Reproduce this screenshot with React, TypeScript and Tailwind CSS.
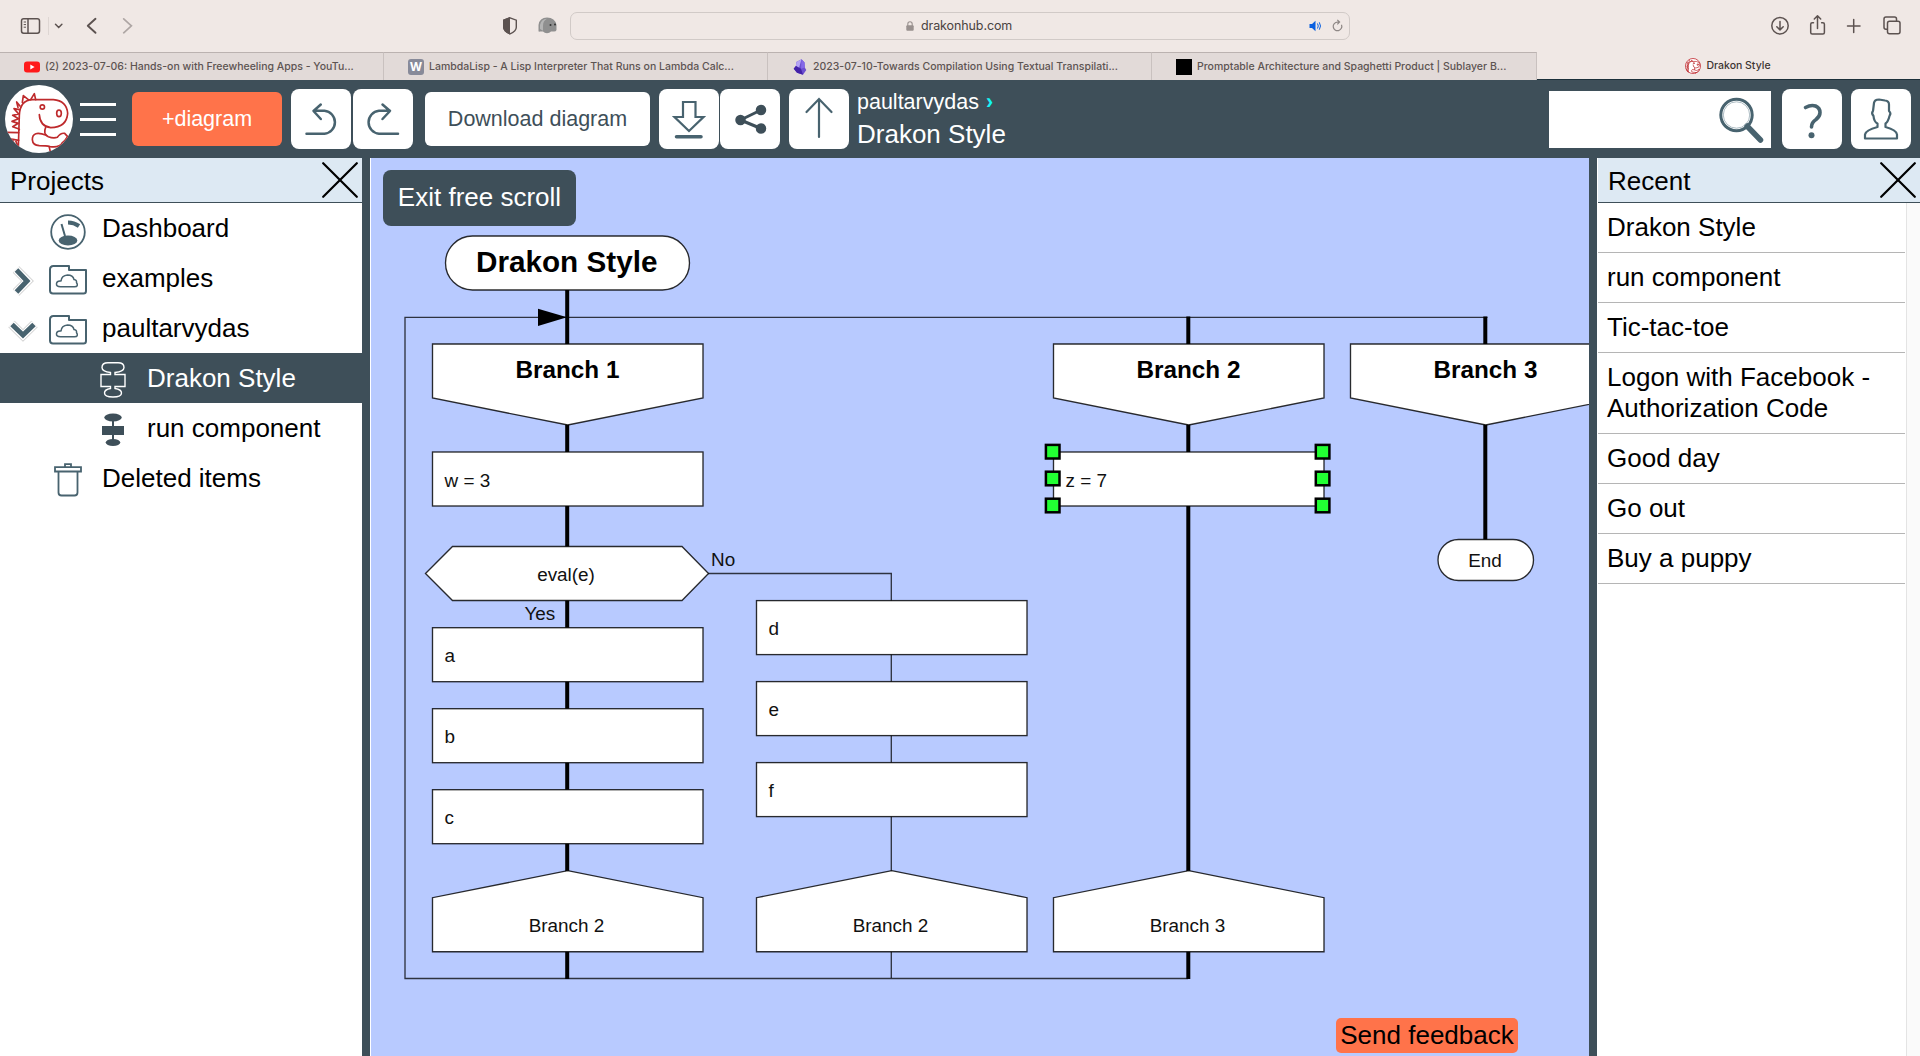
import React from "react";

const SANS = "font-['Liberation_Sans',Arial,sans-serif]";
const UI = "font-[Inter,sans-serif]";
const DARK = "#3e4f59";
const STEEL = "#48636f";

/* ---------- Logo ---------- */

function Dino({ size, ring = false }: { size: number; ring?: boolean }) {
  return (
    <svg width={size} height={size} viewBox="15 21 204 204" className="shrink-0">
      <defs>
        <clipPath id="dino-clip">
          <circle cx="117" cy="123" r="102" />
        </clipPath>
      </defs>
      <circle cx="117" cy="123" r={ring ? 96 : 102} fill="#fff" stroke={ring ? "#c1272d" : "none"} strokeWidth="10" />
      <g clipPath="url(#dino-clip)" fill="none" stroke="#be2a2c" strokeWidth={ring ? 9 : 5} strokeLinejoin="round" strokeLinecap="round">
        <path d="M55 208 L58 112 Q60 66 98 65 L160 65 Q200 68 203 106 Q200 148 152 149 Q120 145 118 110" />
        <circle cx="127" cy="87" r="6.5" />
        <ellipse cx="177" cy="106" rx="7" ry="10" />
        <path d="M137 148 Q128 168 145 176 Q160 182 172 178 Q182 164 194 166 L203 176" />
        <path d="M139 172 Q97 156 97 185 Q98 202 118 203 Q140 203 150 206 Q180 210 187 194 Q194 190 201 178" />
        <path d="M148 208 L152 226" />
        <path d="M92 65 L103 47 L107 65 M67 73 L70 53 L85 65 M60 84 L50 72 L54 88" />
        <path d="M58 95 L42 92 L56 108 L38 112 L56 122 L36 130 L55 136 L38 146 L55 152 L58 155" />
        <path d="M18 163 L56 164 M22 181 L56 187 M36 183 L44 202 M46 186 L52 200" />
      </g>
    </svg>
  );
}

/* ---------- Browser chrome ---------- */

function BrowserBar() {
  return (
    <div className="flex h-[52px] items-center bg-[#f0e8e5] text-[#5c5250]">
      <svg width="110" height="52" viewBox="0 0 110 52" fill="none" stroke="currentColor" strokeWidth="1.5" className="ml-5 shrink-0">
        <rect x="1.5" y="18.7" width="18" height="14.6" rx="2.2" />
        <path d="M8 18.7v14.6" />
        <path d="M3.7 22h2.3M3.7 24.6h2.3M3.7 27.2h2.3" strokeWidth="1" />
        <path d="M28.5 17v18" stroke="#ded6d3" strokeWidth="1" />
        <path d="M35.5 24.3l3.2 3.2 3.2-3.2" strokeLinecap="round" />
        <path d="M75.5 18.8l-7.7 7 7.7 7" strokeWidth="1.9" strokeLinecap="round" strokeLinejoin="round" />
        <path d="M103.7 18.8l7.7 7-7.7 7" stroke="#aea6a4" strokeWidth="1.7" strokeLinecap="round" />
      </svg>
      <svg width="6" height="52" viewBox="0 0 6 52" fill="none" className="shrink-0">
        <path d="M-6.3 18.8l7.7 7-7.7 7" stroke="#aea6a4" strokeWidth="1.7" strokeLinecap="round" />
      </svg>
      <svg width="60" height="52" viewBox="500 0 60 52" className="ml-[364px] shrink-0">
        <path d="M510 17.8l6.3 2.4v7q0 4-6.3 6.6q-6.3-2.6-6.3-6.6v-7z" fill="none" stroke="currentColor" strokeWidth="1.4" />
        <path d="M510 17v17.5q-7-3-7-7.5v-7.3z" fill="currentColor" />
        <path d="M538.5 31v-6q1-7.500 8.500-7.500q8 0 9.500 7.500v5q-.5 1.500-2.500 1.500h-3q-1.500 1.800-4 1.800t-4-1.800h-3q-1.500.5-1.500-.5z" fill="#8f8f8f" />
        <path d="M540 29v-4q1-6 7-6.300q-4 2-4 7v5z" fill="#b4b4b4" />
        <circle cx="550.500" cy="25" r="1" fill="#333" />
        <circle cx="555" cy="24.500" r="1" fill="#333" />
      </svg>
      <div className="ml-[10px] flex h-7 w-[780px] shrink-0 items-center rounded-[7px] border border-[#d1cac7]">
        <div className="flex w-full items-center">
          <svg width="8" height="10" viewBox="0 0 8 10" className="ml-[335px] shrink-0">
            <path d="M1.8 5V3a2.200 2.200 0 0 1 4.400 0v2" fill="none" stroke="#99918f" strokeWidth="1.100" />
            <rect x="0.300" y="4.200" width="7.400" height="5.600" rx="1" fill="#99918f" />
          </svg>
          <span className={`${UI} ml-[7px] w-[388px] text-[12.500px] leading-4 tracking-[-0.1px] text-[#4a4341]`}>drakonhub.com</span>
          <svg width="36" height="14" viewBox="0 0 36 14" fill="none" className="shrink-0">
            <path d="M.5 5h2.500l3.500-3.200v10.500l-3.500-3.200h-2.500z" fill="#0a60e0" />
            <path d="M8.500 4.500q1.500 2.500 0 5M10.300 3.300q2.400 3.700 0 7.400" stroke="#0a60e0" strokeWidth="1" />
            <path d="M32.500 5.800a4.300 4.300 0 1 1-4-2.700h1.500M28.300.8l2.300 2.300-2.300 2.300" stroke="#8e8785" strokeWidth="1.200" />
          </svg>
        </div>
      </div>
      <svg width="136" height="52" viewBox="1770 0 136 52" fill="none" stroke="currentColor" strokeWidth="1.5" strokeLinecap="round" strokeLinejoin="round" className="ml-[420px] shrink-0">
        <circle cx="1780" cy="25.700" r="8.200" />
        <path d="M1780 21.500v8.200M1776.800 26.700l3.200 3.200 3.200-3.200" />
        <path d="M1813.500 22.700h-1.300q-1.500 0-1.500 1.500v8.300q0 1.500 1.500 1.500h10.700q1.500 0 1.500-1.500v-8.300q0-1.500-1.500-1.500h-1.300" />
        <path d="M1817.500 28.500v-12.500M1814.300 19l3.200-3.200 3.200 3.200" />
        <path d="M1847.500 26h12.500M1853.700 19.500v13" />
        <rect x="1887.500" y="21.200" width="12.500" height="12.500" rx="2" />
        <path d="M1887 29.300h-1q-2 0-2-2v-8.300q0-2 2-2h8.500q2 0 2 2v1.500" />
      </svg>
    </div>
  );
}

function Tab({ children, text, className, textClass }: { children: React.ReactNode; text: string; className: string; textClass: string }) {
  return (
    <div className={`flex h-[28px] shrink-0 items-center border-t border-[#bbb2b0] bg-[#e2dad8] ${className}`}>
      <span className="flex w-4 shrink-0 justify-center">{children}</span>
      <span className={`${UI} ml-[5px] whitespace-nowrap text-[10.500px] font-medium leading-4 text-[#5d5452] ${textClass}`}>{text}</span>
    </div>
  );
}

function TabBar() {
  return (
    <div className="flex h-7 border-b border-[#1c303a] bg-[#f0e8e5]">
      <Tab className="w-[384px] border-r border-r-[#c9c1bf] pl-6" textClass="" text="(2) 2023-07-06: Hands-on with Freewheeling Apps - YouTu...">
        <svg width="16" height="12" viewBox="0 0 16 12">
          <rect width="16" height="11" y=".5" rx="3" fill="#ff1a1a" />
          <path d="M6.300 3.500v5l4.300-2.500z" fill="#fff" />
        </svg>
      </Tab>
      <Tab className="w-[384px] border-r border-r-[#c9c1bf] pl-6" textClass="" text="LambdaLisp - A Lisp Interpreter That Runs on Lambda Calc...">
        <span className={`${UI} flex size-4 items-center justify-center rounded-[3px] bg-[#878a99] text-[12px] font-bold leading-none text-white`}>W</span>
      </Tab>
      <Tab className="w-[384px] border-r border-r-[#c9c1bf] pl-6" textClass="" text="2023-07-10-Towards Compilation Using Textual Transpilati...">
        <svg width="14" height="16" viewBox="0 0 14 16">
          <path d="M8.500.3l3 3.200.3 5 1.500 2.500-3.300 4.700-6-2-3.300-4 2.300-3.200.3-3.500z" fill="#6c4fd0" />
          <path d="M8.500.3l-5.200 2.700-.3 4 3 2z" fill="#b5a4f5" />
          <path d="M3 7l-2.300 2.700 3.300 4 6 2-2-6z" fill="#4322a8" />
          <path d="M8.500.3l3 3.200.3 5-3.800 1.200z" fill="#8468e8" />
        </svg>
      </Tab>
      <Tab className="w-[385px] border-r border-r-[#c9c1bf] pl-6" textClass="" text="Promptable Architecture and Spaghetti Product | Sublayer B...">
        <span className="size-4 bg-black" />
      </Tab>
      <div className="flex grow items-center justify-center">
        <Dino size={16} ring />
        <span className={`${UI} ml-[5px] mr-px text-[10.500px] font-medium leading-4 text-[#3d3533]`}>Drakon Style</span>
      </div>
    </div>
  );
}

/* ---------- Application header ---------- */

function IconButton({ children, className = "" }: { children: React.ReactNode; className?: string }) {
  return (
    <button className={`h-[60px] w-[60px] shrink-0 rounded-[8px] bg-white ${className}`}>
      <svg width="60" height="60" viewBox="0 0 60 60" fill="none" stroke={STEEL} strokeWidth="2.500" strokeLinecap="round" strokeLinejoin="round">
        {children}
      </svg>
    </button>
  );
}

function AppHeader() {
  return (
    <header className="flex h-[78px] items-center bg-[#3e4f59] pl-[5px]">
      <Dino size={68} />
      <div className="ml-[7px] flex w-9 flex-col gap-3">
        <span className="h-[3px] bg-white" />
        <span className="h-[3px] bg-white" />
        <span className="h-[3px] bg-white" />
      </div>
      <button className="ml-4 h-[54px] w-[150px] shrink-0 rounded-[6px] bg-[#ff734a] text-[21.500px] text-white">+diagram</button>
      <IconButton className="ml-[9px]">
        <path d="M15.500 44.700H33.500A11.500 11.500 0 0 0 33.500 21.800H23M29.800 15.500L22.500 22L29.800 30" />
      </IconButton>
      <IconButton className="ml-[2px]">
        <path d="M45 44.700H26A11.500 11.500 0 0 1 26 21.800H37M29.500 15.500L37 22L29.500 30" />
      </IconButton>
      <button className="ml-3 h-[54px] w-[225px] shrink-0 rounded-[6px] bg-white text-[21.500px] text-[#3e4f59]">Download diagram</button>
      <IconButton className="ml-[9px]">
        <path d="M24 13H36.500V28H44.500L30 42L15.500 28H24Z" strokeLinejoin="miter" strokeWidth="2.200" />
        <path d="M17.500 47.700H42" strokeWidth="3.500" />
      </IconButton>
      <IconButton className="ml-px">
        <g stroke={DARK} fill={DARK}>
          <path d="M41 21L20.500 31L41 39.500" fill="none" strokeWidth="3" />
          <circle cx="41" cy="21" r="4" />
          <circle cx="20.500" cy="31" r="4" />
          <circle cx="41" cy="39.500" r="4" />
        </g>
      </IconButton>
      <IconButton className="ml-[9px]">
        <path d="M30 48V10M17.500 23L30 10L42.500 23" strokeWidth="2.200" strokeLinejoin="miter" />
      </IconButton>
      <div className="ml-2 flex flex-col whitespace-nowrap text-white">
        <span className="text-[21.500px] leading-[26px]">
          paultarvydas <span className="ml-px font-bold text-[#15f5f5]">›</span>
        </span>
        <span className="mt-1 text-[26px] leading-[31px]">Drakon Style</span>
      </div>
      <div className="ml-auto flex h-[57px] w-[222px] shrink-0 justify-end bg-white">
        <svg width="60" height="57" viewBox="0 0 60 57" fill="none" stroke={STEEL}>
          <path d="M36 35L49.500 49" strokeWidth="5.500" strokeLinecap="round" />
          <circle cx="25.500" cy="24" r="15.700" strokeWidth="3" />
          <circle cx="25.500" cy="24" r="13.200" strokeWidth=".7" stroke="#8ba0aa" />
        </svg>
      </div>
      <IconButton className="ml-[11px]">
        <path d="M23.500 18.500Q29 15.500 33.500 17Q38 19 38 23.500Q38 27.500 34 30.500Q29.500 33.500 29.500 38" strokeWidth="3.600" />
        <circle cx="29.500" cy="46.300" r="3" fill={STEEL} stroke="none" />
      </IconButton>
      <IconButton className="ml-[9px] mr-[9px]">
        <path d="M22 22L23 14Q23.500 10.500 28 10.500L34 11.500Q38 12 38 15.500V22Q40.500 24 38.500 27Q37 33 34.500 34.500V38Q45.500 41 46 45.500V49.500H14V45.500Q15 41 26.500 38V34.500Q23 33 22.500 27Q20 24 22 22Z" strokeWidth="2.200" />
      </IconButton>
    </header>
  );
}

/* ---------- Side panels ---------- */

function PanelHeader({ title, className }: { title: string; className: string }) {
  return (
    <div className={`flex h-[45px] items-center justify-between border-b border-[#3e4f59] bg-[#dde9f3] ${className}`}>
      <span className="mt-[3px] text-[26px] leading-[31px]">{title}</span>
      <svg width="36" height="36" viewBox="0 0 36 36" stroke="#000" strokeWidth="2.200" strokeLinecap="round">
        <path d="M1.200 1.200L34.800 34.800M34.800 1.200L1.200 34.800" />
      </svg>
    </div>
  );
}

function CloudFolder() {
  return (
    <svg width="38" height="30" viewBox="0 0 38 30" fill="none" stroke={STEEL} strokeWidth="2" strokeLinejoin="round">
      <path d="M1 4.500Q1 1 4.500 1H20V5H37V26Q37 28.500 34.500 28.500H4Q1 28.500 1 25.500Z" />
      <path d="M11.500 21.800Q7 21.500 7.500 18.500Q8 15.500 12 16Q12.500 10.500 18.500 10Q24 10 25 14.500Q28 15 27.500 17.500Q30 21.500 25.500 21.800Z" strokeWidth="1.500" />
    </svg>
  );
}

function Chevron({ down = false }: { down?: boolean }) {
  return (
    <svg width="34" height="34" viewBox="0 0 34 34" fill="none" className={down ? "rotate-90" : ""}>
      <path d="M10 5.500L21.500 17L10 28.500" stroke="#c9c9c9" strokeWidth="9" />
      <path d="M10 5.500L21.500 17L10 28.500" stroke="#fff" strokeWidth="7.500" />
      <path d="M10.500 6L21 17L10.500 28" stroke={STEEL} strokeWidth="5" />
    </svg>
  );
}

function TreeRow({ chevron, icon, label, nested = false, active = false }: { chevron?: React.ReactNode; icon: React.ReactNode; label: string; nested?: boolean; active?: boolean }) {
  return (
    <div className={`flex h-[50px] items-center ${active ? "bg-[#3e4f59] text-white" : ""}`}>
      <span className="flex w-[45px] shrink-0 justify-center pt-[6px]">{chevron}</span>
      <span className={`flex shrink-0 justify-center pt-1 ${nested ? "ml-[45px] w-[45px]" : "w-[45px]"}`}>{icon}</span>
      <span className={`${nested ? "ml-3" : "ml-3"} whitespace-nowrap text-[26px] leading-[31px]`}>{label}</span>
    </div>
  );
}

function ProjectsPanel() {
  return (
    <aside className="w-[362px] shrink-0 bg-white">
      <PanelHeader title="Projects" className="pl-[10px] pr-1" />
      <TreeRow
        label="Dashboard"
        icon={
          <svg width="36" height="36" viewBox="0 0 36 36" fill="none" stroke={STEEL} className="mt-1">
            <circle cx="18" cy="18" r="16.800" strokeWidth="1.800" />
            <ellipse cx="18" cy="26.500" rx="9.300" ry="5" fill={STEEL} stroke="none" />
            <path d="M11.500 10L15 22" strokeWidth="2" />
            <path d="M18 8.500Q24 8.500 29 12" strokeWidth="4" />
          </svg>
        }
      />
      <TreeRow chevron={<Chevron />} icon={<CloudFolder />} label="examples" />
      <TreeRow chevron={<Chevron down />} icon={<CloudFolder />} label="paultarvydas" />
      <TreeRow
        nested
        active
        label="Drakon Style"
        icon={
          <svg width="26" height="36" viewBox="0 0 26 36" fill="none" stroke="#fff" strokeWidth="1.400">
            <path d="M10.500 12.500V10.500Q2 9.500 2 5.500Q2 .8 8 .8H18Q24 .8 24 5.500Q24 9.500 15 10.500V12.500H25V24.500H15V26.500Q21.500 27.500 21.500 31Q21.500 35 13 35Q4.500 35 4.500 31Q4.500 27.500 10.500 26.500V24.500H1V12.500Z" />
          </svg>
        }
      />
      <TreeRow
        nested
        label="run component"
        icon={
          <svg width="26" height="34" viewBox="0 0 26 34" fill={DARK}>
            <ellipse cx="13" cy="4.500" rx="8.700" ry="4" />
            <rect x="2" y="13" width="22" height="9" />
            <ellipse cx="13" cy="29.500" rx="7.300" ry="3.500" />
            <rect x="12" y="5" width="2" height="24" />
          </svg>
        }
      />
      <TreeRow
        label="Deleted items"
        icon={
          <svg width="28" height="34" viewBox="0 0 28 34" fill="none" stroke={STEEL} strokeWidth="1.800">
            <path d="M1 4.200H27V8.500H1ZM11 4V1.200H17V4M4.500 9V29.500Q4.500 32.500 7.500 32.500H20.500Q23.500 32.500 23.500 29.500V9" />
          </svg>
        }
      />
    </aside>
  );
}

const RECENT = ["Drakon Style", "run component", "Tic-tac-toe", "Logon with Facebook - Authorization Code", "Good day", "Go out", "Buy a puppy"];

function RecentPanel() {
  return (
    <aside className="flex w-[322px] shrink-0 flex-col bg-white">
      <PanelHeader title="Recent" className="pl-[10px] pr-1" />
      <div className="flex grow">
        <ul className="w-[307px] shrink-0">
          {RECENT.map((item) => (
            <li key={item} className="border-b border-[#b5b5b5] pb-[9px] pl-[9px] pr-4 pt-[9px] text-[26px] leading-[31px]">
              {item}
            </li>
          ))}
        </ul>
        <div className="ml-px grow border-l border-[#e4e4e4] bg-[#fafafa]" />
      </div>
    </aside>
  );
}

/* ---------- Diagram ---------- */

function Action({ x, y, text }: { x: number; y: number; text: string }) {
  return (
    <g>
      <rect x={x} y={y} width="270.500" height="54" fill="#fff" stroke="#000" strokeOpacity=".82" strokeWidth="1.350" />
      <text x={x + 12} y={y + 34.500} fontSize="18.900" fill="#111">{text}</text>
    </g>
  );
}

function Header({ x, y, text }: { x: number; y: number; text: string }) {
  return (
    <g>
      <path d={`M${x} ${y}h270.500v54l-135.250 27l-135.250-27z`} fill="#fff" stroke="#000" strokeOpacity=".82" strokeWidth="1.350" />
      <text x={x + 135} y={y + 34} fontSize="24.300" fontWeight="700" textAnchor="middle">{text}</text>
    </g>
  );
}

function Footer({ x, y, text }: { x: number; y: number; text: string }) {
  return (
    <g>
      <path d={`M${x} ${y}v-54l135.250-27l135.250 27v54z`} fill="#fff" stroke="#000" strokeOpacity=".82" strokeWidth="1.350" />
      <text x={x + 134} y={y - 20} fontSize="18.900" textAnchor="middle" fill="#111">{text}</text>
    </g>
  );
}

function Diagram() {
  return (
    <svg width="1218" height="898" viewBox="371 158 1218 898" className={`block ${SANS}`}>
      <g stroke="#000" strokeOpacity=".75" strokeWidth="1.350" fill="none">
        <path d="M1188 978.500H405V317.300H1487.500" />
        <path d="M708 573.500H891.300V978" />
      </g>
      <g stroke="#000" strokeWidth="4" fill="none">
        <path d="M567.200 290V979" />
        <path d="M1188.300 316.500V979" />
        <path d="M1485.300 316.500V540" />
      </g>
      <path d="M538 308.700L567 317.300L538 326z" />
      <rect x="445.500" y="236" width="244" height="54" rx="27" fill="#fff" stroke="#000" strokeOpacity=".82" strokeWidth="1.350" />
      <text x="566.700" y="272" fontSize="29.700" fontWeight="700" textAnchor="middle">Drakon Style</text>

      <Header x={432.5} y={344} text="Branch 1" />
      <Header x={1053.500} y={344} text="Branch 2" />
      <Header x={1350.500} y={344} text="Branch 3" />

      <Action x={432.5} y={452} text="w = 3" />
      <path d="M425.500 573.500L452.500 546.500H682L708.500 573.500L682 600.500H452.500Z" fill="#fff" stroke="#000" strokeOpacity=".82" strokeWidth="1.350" />
      <text x="566" y="580.500" fontSize="18.900" textAnchor="middle" fill="#111">eval(e)</text>
      <text x="711" y="566" fontSize="18.900" fill="#111">No</text>
      <text x="524.500" y="620" fontSize="18.900" fill="#111">Yes</text>

      <Action x={432.5} y={627.700} text="a" />
      <Action x={432.5} y={708.700} text="b" />
      <Action x={432.5} y={789.700} text="c" />
      <Action x={756.500} y={600.600} text="d" />
      <Action x={756.500} y={681.600} text="e" />
      <Action x={756.500} y={762.600} text="f" />
      <Footer x={432.5} y={951.700} text="Branch 2" />
      <Footer x={756.500} y={951.700} text="Branch 2" />
      <Footer x={1053.500} y={951.700} text="Branch 3" />

      <Action x={1053.500} y={452} text="z = 7" />
      {[1052.700, 1322.600].map((cx) =>
        [451.700, 478.500, 505.500].map((cy) => (
          <rect key={`${cx}-${cy}`} x={cx - 6.800} y={cy - 6.800} width="13.600" height="13.600" fill="#22ff33" stroke="#000" strokeWidth="2.500" />
        ))
      )}

      <rect x="1438" y="539.500" width="95.500" height="41" rx="20.500" fill="#fff" stroke="#000" strokeOpacity=".82" strokeWidth="1.350" />
      <text x="1485" y="567" fontSize="18.900" textAnchor="middle" fill="#111">End</text>
    </svg>
  );
}

export default function App() {
  return (
    <div className={`flex h-[1056px] w-[1920px] flex-col overflow-hidden bg-white text-black ${SANS}`}>
      <BrowserBar />
      <TabBar />
      <AppHeader />
      <main className="flex h-[898px]">
        <ProjectsPanel />
        <div className="w-2 shrink-0 bg-[#3e4f59]" />
        <section className="relative ml-px w-[1218px] shrink-0 overflow-hidden bg-[#b8caff]">
          <Diagram />
          <button className="absolute left-3 top-3 h-14 w-[193px] rounded-[8px] bg-[#3e4f59] pb-px text-[26px] text-white">Exit free scroll</button>
          <button className="absolute bottom-[3px] left-[965px] h-[35px] w-[182px] whitespace-nowrap rounded-[5px] bg-[#ff734a] text-[26px] leading-[35px]">Send feedback</button>
        </section>
        <div className="mr-px w-2 shrink-0 bg-[#3e4f59]" />
        <RecentPanel />
      </main>
    </div>
  );
}
